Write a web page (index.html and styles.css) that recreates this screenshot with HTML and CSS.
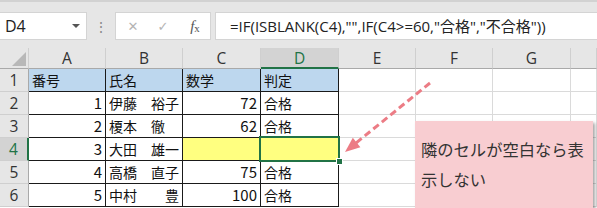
FILE: index.html
```html
<!DOCTYPE html>
<html lang="ja">
<head>
    <meta charset="UTF-8">
    <title>IF ISBLANK</title>
    <link rel="stylesheet" href="styles.css">
</head>
<body>
    <div class="app">
        <div class="formula-bar">
            <div class="name-box"><span>D4</span><span class="caret"></span></div>
            <div class="grip">⋮</div>
            <div class="fx-buttons">
                <span class="btn">✕</span>
                <span class="btn">✓</span>
                <span class="btn fx"><i>f</i><sub>x</sub></span>
            </div>
            <div class="formula">=IF(ISBLANK(C4),"",IF(C4&gt;=60,"合格","不合格"))</div>
        </div>

        <div class="sheet">
            <div class="hd corner">
                <svg width="16" height="16" viewBox="0 0 16 16"><polygon points="15,1 15,15 1,15" fill="#b8b8b8"/></svg>
            </div>
            <div class="hd">A</div>
            <div class="hd">B</div>
            <div class="hd">C</div>
            <div class="hd active-col">D</div>
            <div class="hd">E</div>
            <div class="hd">F</div>
            <div class="hd">G</div>
            <div class="hd"></div>

            <div class="hd row">1</div>
            <div class="c t title">番号</div>
            <div class="c t title">氏名</div>
            <div class="c t title">数学</div>
            <div class="c t title">判定</div>
            <div class="c"></div><div class="c"></div><div class="c"></div><div class="c"></div>

            <div class="hd row">2</div>
            <div class="c t num">1</div>
            <div class="c t">伊藤　裕子</div>
            <div class="c t num">72</div>
            <div class="c t">合格</div>
            <div class="c"></div><div class="c"></div><div class="c"></div><div class="c"></div>

            <div class="hd row">3</div>
            <div class="c t num">2</div>
            <div class="c t">榎本　徹</div>
            <div class="c t num">62</div>
            <div class="c t">合格</div>
            <div class="c"></div><div class="c"></div><div class="c"></div><div class="c"></div>

            <div class="hd row active-row">4</div>
            <div class="c t num">3</div>
            <div class="c t">大田　雄一</div>
            <div class="c t mark"></div>
            <div class="c t mark selected"></div>
            <div class="c"></div><div class="c"></div><div class="c"></div><div class="c"></div>

            <div class="hd row">5</div>
            <div class="c t num">4</div>
            <div class="c t">高橋　直子</div>
            <div class="c t num">75</div>
            <div class="c t">合格</div>
            <div class="c"></div><div class="c"></div><div class="c"></div><div class="c"></div>

            <div class="hd row">6</div>
            <div class="c t num">5</div>
            <div class="c t">中村　　豊</div>
            <div class="c t num">100</div>
            <div class="c t">合格</div>
            <div class="c"></div><div class="c"></div><div class="c"></div><div class="c"></div>
        </div>

        <svg class="arrow" width="597" height="208" viewBox="0 0 597 208">
            <line x1="430" y1="83" x2="356" y2="143" stroke="#ec7c85" stroke-width="3" stroke-dasharray="7 4"/>
            <polygon points="345,152 360.4,147.2 352.8,137.8" fill="#ec7c85"/>
        </svg>

        <div class="callout">隣のセルが空白なら表示しない</div>
    </div>
</body>
</html>
```

FILE: styles.css
```css
body {
    margin: 0;
    font-family: 'Noto Sans CJK JP', sans-serif;
    background-color: #fff;
}

.app {
    position: relative;
    width: 597px;
    height: 208px;
    overflow: hidden;
}

/* formula bar */
.formula-bar {
    display: flex;
    align-items: flex-start;
    height: 48px;
    box-sizing: border-box;
    padding-top: 10px;
    background-color: #e6e6e6;
    border-top: 2px solid #d2d2d2;
}

.name-box {
    display: flex;
    align-items: center;
    justify-content: space-between;
    width: 87px;
    height: 28px;
    box-sizing: border-box;
    padding: 0 6px 0 5px;
    background-color: #fff;
    border: 1px solid #d4d4d4;
    border-left: none;
    font-family: 'Open Sans', sans-serif;
    font-size: 16px;
    color: #222;
}

.caret {
    width: 0;
    height: 0;
    border-left: 4px solid transparent;
    border-right: 4px solid transparent;
    border-top: 4px solid #555;
}

.grip {
    width: 28px;
    height: 28px;
    line-height: 28px;
    text-align: center;
    color: #8a8a8a;
    font-size: 14px;
}

.fx-buttons {
    display: flex;
    align-items: center;
    width: 96px;
    height: 28px;
    box-sizing: border-box;
    background-color: #fff;
    border: 1px solid #d4d4d4;
}

.btn {
    width: 30px;
    text-align: center;
    color: #b4b4b4;
    font-family: 'DejaVu Sans', sans-serif;
    font-size: 13px;
}

.btn:first-child {
    margin-left: 2px;
}

.fx {
    color: #555;
    font-family: 'Liberation Serif', serif;
    font-size: 15px;
    margin-left: 2px;
}

.fx sub {
    font-size: 11px;
    vertical-align: -1px;
}

.formula {
    flex: 1;
    height: 28px;
    line-height: 27px;
    box-sizing: border-box;
    margin-left: 4px;
    padding-left: 14px;
    background-color: #fff;
    border: 1px solid #d4d4d4;
    border-right: none;
    font-family: 'Open Sans', 'Noto Sans CJK JP', sans-serif;
    font-size: 15px;
    color: #222;
    white-space: nowrap;
}

/* grid */
.sheet {
    display: grid;
    grid-template-columns: 29px 77px 77px 78px 78px 77px 77px 78px 26px;
    grid-template-rows: 21px repeat(6, 23px);
}

.sheet > div {
    box-sizing: border-box;
    border-right: 1px solid #dadada;
    border-bottom: 1px solid #dadada;
}

.hd {
    background-color: #e6e6e6;
    text-align: center;
    font-family: 'Open Sans', sans-serif;
    font-size: 15.5px;
    line-height: 20px;
    color: #333;
}

.sheet > .hd {
    border-right-color: #cfcfcf;
    border-bottom-color: #a9a9a9;
}

.sheet > .row {
    border-right-color: #a9a9a9;
    border-bottom-color: #cfcfcf;
    line-height: 22px;
}

.corner {
    position: relative;
}

.corner svg {
    position: absolute;
    right: 1px;
    bottom: 1px;
}

.sheet > .active-col {
    background-color: #d3d3d3;
    color: #217346;
    border-bottom: 2px solid #217346;
}

.sheet > .active-row {
    background-color: #d3d3d3;
    color: #217346;
    border-right: 2px solid #217346;
}

.c {
    padding: 0 3px;
    font-size: 14px;
    line-height: 22px;
    color: #111;
    white-space: nowrap;
}

.c.num {
    font-size: 15px;
}

.sheet > .t {
    border-right-color: #1a1a1a;
    border-bottom-color: #1a1a1a;
}

.title {
    background-color: #bdd7ee;
}

.num {
    text-align: right;
}

.mark {
    background-color: #ffff80;
}

.selected {
    position: relative;
}

.selected::after {
    content: '';
    position: absolute;
    left: -2px;
    top: -2px;
    right: -2px;
    bottom: -2px;
    border: 2px solid #217346;
}

.selected::before {
    content: '';
    position: absolute;
    right: -5px;
    bottom: -5px;
    width: 5px;
    height: 5px;
    background-color: #217346;
    border: 1px solid #fff;
    z-index: 1;
}

/* annotation */
.arrow {
    position: absolute;
    left: 0;
    top: 0;
}

.callout {
    position: absolute;
    left: 415px;
    top: 121px;
    width: 178px;
    height: 100px;
    box-sizing: border-box;
    padding: 13px 4px 0 6px;
    background-color: #f8cdd1;
    box-shadow: 2px 2px 3px rgba(0, 0, 0, 0.35);
    font-size: 16.3px;
    line-height: 30px;
    color: #333;
}
```
